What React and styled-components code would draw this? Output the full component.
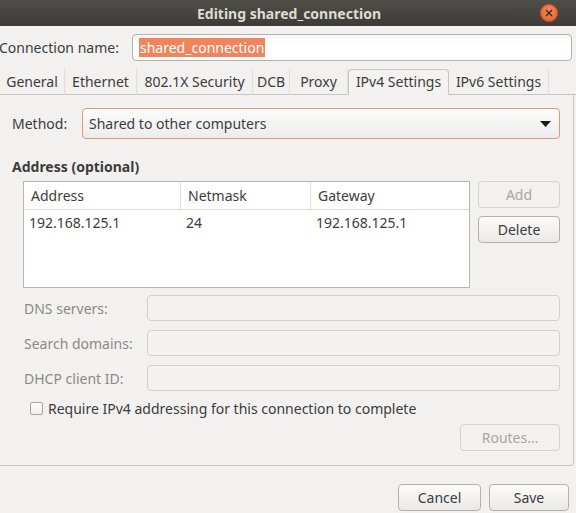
import React from "react";
import styled, { createGlobalStyle } from "styled-components";

const GlobalStyle = createGlobalStyle`
  html, body {
    margin: 0;
    padding: 0;
    background: #f2f1f0;
  }
  body {
    width: 576px;
    height: 513px;
    overflow: hidden;
    font-family: "Noto Sans", "Open Sans", sans-serif;
    font-size: 14px;
    color: #3c3c3c;
  }
`;

const tabs = [
  { name: "General", w: 65 },
  { name: "Ethernet", w: 72 },
  { name: "802.1X Security", w: 116 },
  { name: "DCB", w: 37 },
  { name: "Proxy", w: 58 },
  { name: "IPv4 Settings", w: 101, active: true },
  { name: "IPv6 Settings", w: 100 },
];

const App = () => {
  return (
    <>
      <GlobalStyle />
      <Window>
        <TitleBar>
          <Title>Editing shared_connection</Title>
          <CloseButton>
            <svg width="8" height="8" viewBox="0 0 8 8">
              <path d="M1 1L7 7M7 1L1 7" stroke="#3a2a22" strokeWidth="1.4" />
            </svg>
          </CloseButton>
        </TitleBar>

        <NameRow>
          <NameLabel>Connection name:</NameLabel>
          <Entry>
            <Selected>shared_connection</Selected>
          </Entry>
        </NameRow>

        <TabBar>
          {tabs.map((t) => (
            <Tab key={t.name} $w={t.w} $active={t.active}>
              {t.name}
            </Tab>
          ))}
          <TabFill />
        </TabBar>

        <Panel>
          <MethodRow>
            <MethodLabel>Method:</MethodLabel>
            <Combo>
              <span>Shared to other computers</span>
              <svg width="11" height="6" viewBox="0 0 11 6">
                <path d="M0 0H11L5.5 6Z" fill="#1a1a1a" />
              </svg>
            </Combo>
          </MethodRow>

          <SectionTitle>Address (optional)</SectionTitle>

          <AddressArea>
            <Table>
              <HeadRow>
                <HeadCell $w={157}>Address</HeadCell>
                <HeadCell $w={130}>Netmask</HeadCell>
                <HeadCell $w={158} $last>
                  Gateway
                </HeadCell>
              </HeadRow>
              <BodyRow>
                <Cell $w={157}>192.168.125.1</Cell>
                <Cell $w={130}>24</Cell>
                <Cell $w={158}>192.168.125.1</Cell>
              </BodyRow>
            </Table>
            <SideButtons>
              <Button $disabled $w={82}>
                Add
              </Button>
              <Button $w={82}>Delete</Button>
            </SideButtons>
          </AddressArea>

          <FieldGrid>
            <FieldLabel>DNS servers:</FieldLabel>
            <DisabledEntry />
            <FieldLabel>Search domains:</FieldLabel>
            <DisabledEntry />
            <FieldLabel>DHCP client ID:</FieldLabel>
            <DisabledEntry />
          </FieldGrid>

          <CheckRow>
            <CheckBox />
            <span>Require IPv4 addressing for this connection to complete</span>
          </CheckRow>

          <RoutesRow>
            <Button $disabled $w={100}>
              Routes…
            </Button>
          </RoutesRow>
        </Panel>

        <ActionRow>
          <Button $w={83}>Cancel</Button>
          <Button $w={80}>Save</Button>
        </ActionRow>
      </Window>
    </>
  );
};

const Window = styled.div`
  display: flex;
  flex-direction: column;
  width: 576px;
  height: 513px;
`;

const TitleBar = styled.div`
  position: relative;
  height: 26px;
  display: flex;
  align-items: center;
  justify-content: center;
  background: linear-gradient(#4f4e49, #3c3b37);
`;

const Title = styled.div`
  color: #dfdbd2;
  font-weight: bold;
  font-size: 14px;
  margin-left: 2px;
`;

const CloseButton = styled.div`
  position: absolute;
  right: 18px;
  top: 4px;
  width: 18px;
  height: 18px;
  border-radius: 50%;
  background: radial-gradient(circle at 50% 35%, #f58a5a, #e0582a);
  box-shadow: inset 0 0 0 1px #b9481f;
  display: flex;
  align-items: center;
  justify-content: center;
`;

const NameRow = styled.div`
  display: flex;
  align-items: center;
  margin: 8px 4px 0 -1px;
`;

const NameLabel = styled.div`
  width: 133px;
`;

const Entry = styled.div`
  flex: 1;
  height: 25px;
  display: flex;
  align-items: center;
  padding-left: 6px;
  border: 1px solid #b7b2ac;
  border-radius: 4px;
  background: linear-gradient(#f6f6f6, #ffffff 40%);
`;

const Selected = styled.span`
  background: #f0845c;
  color: #ffffff;
  line-height: 19px;
  padding: 0 1px;
`;

const TabBar = styled.div`
  display: flex;
  align-items: flex-end;
  height: 27px;
  margin-top: 6px;
  border-bottom: 1px solid #c9c5bf;
`;

const Tab = styled.div`
  width: ${(p) => p.$w}px;
  box-sizing: border-box;
  height: 26px;
  display: flex;
  align-items: center;
  justify-content: center;
  padding-bottom: 2px;
  margin-bottom: -1px;
  border-right: 1px solid #e2dfdb;
  ${(p) =>
    p.$active &&
    `
    border: 1px solid #c9c5bf;
    border-bottom: 1px solid #f2f1f0;
    border-radius: 4px 4px 0 0;
    background: #f3f2f1;
  `}
`;

const TabFill = styled.div`
  flex: 1;
`;

const Panel = styled.div`
  height: 371px;
  margin-right: 2px;
  border: 1px solid #c9c5bf;
  border-top: none;
  border-left: none;
  border-bottom-right-radius: 4px;
  padding: 13px 13px 0 12px;
  box-sizing: border-box;
  display: flex;
  flex-direction: column;
`;

const MethodRow = styled.div`
  display: flex;
  align-items: center;
`;

const MethodLabel = styled.div`
  width: 70px;
`;

const Combo = styled.div`
  flex: 1;
  height: 29px;
  display: flex;
  align-items: center;
  justify-content: space-between;
  padding: 0 8px 0 6px;
  border: 1px solid #dd9a7e;
  border-radius: 4px;
  background: linear-gradient(#fcfcfc, #eeecea);
`;

const SectionTitle = styled.div`
  font-weight: bold;
  margin-top: 18px;
`;

const AddressArea = styled.div`
  display: flex;
  gap: 8px;
  margin: 5px 0 0 11px;
`;

const Table = styled.div`
  width: 445px;
  height: 105px;
  background: #ffffff;
  border: 1px solid #b8b3ad;
`;

const HeadRow = styled.div`
  display: flex;
  height: 27px;
  border-bottom: 1px solid #dedbd7;
`;

const HeadCell = styled.div`
  width: ${(p) => p.$w}px;
  box-sizing: border-box;
  display: flex;
  align-items: center;
  padding-left: 7px;
  border-right: ${(p) => (p.$last ? "none" : "1px solid #e4e1dd")};
`;

const BodyRow = styled.div`
  display: flex;
  height: 24px;
`;

const Cell = styled.div`
  width: ${(p) => p.$w}px;
  box-sizing: border-box;
  display: flex;
  align-items: center;
  padding-left: 5px;
`;

const SideButtons = styled.div`
  display: flex;
  flex-direction: column;
  gap: 8px;
`;

const Button = styled.div`
  width: ${(p) => p.$w}px;
  height: 27px;
  box-sizing: border-box;
  display: flex;
  align-items: center;
  justify-content: center;
  border-radius: 4px;
  border: 1px solid ${(p) => (p.$disabled ? "#d5d2cd" : "#b4afa9")};
  color: ${(p) => (p.$disabled ? "#a9a6a1" : "#3c3c3c")};
  background: ${(p) =>
    p.$disabled ? "#f2f1f0" : "linear-gradient(#fbfbfa, #ebe9e6)"};
`;

const FieldGrid = styled.div`
  display: grid;
  grid-template-columns: 123px 1fr;
  row-gap: 9px;
  align-items: center;
  margin: 7px 0 0 12px;
`;

const FieldLabel = styled.div`
  color: #8c8984;
`;

const DisabledEntry = styled.div`
  height: 26px;
  box-sizing: border-box;
  border: 1px solid #d3d0cb;
  border-radius: 4px;
  background: #f3f2f1;
`;

const CheckRow = styled.div`
  display: flex;
  align-items: center;
  gap: 5px;
  margin: 8px 0 0 18px;
`;

const CheckBox = styled.div`
  width: 11px;
  height: 11px;
  border: 1px solid #a9a49e;
  border-radius: 2px;
  background: linear-gradient(#ffffff, #efedeb);
`;

const RoutesRow = styled.div`
  display: flex;
  justify-content: flex-end;
  margin-top: 6px;
`;

const ActionRow = styled.div`
  display: flex;
  justify-content: flex-end;
  gap: 8px;
  margin: 18px 7px 0 0;
`;

export default App;
